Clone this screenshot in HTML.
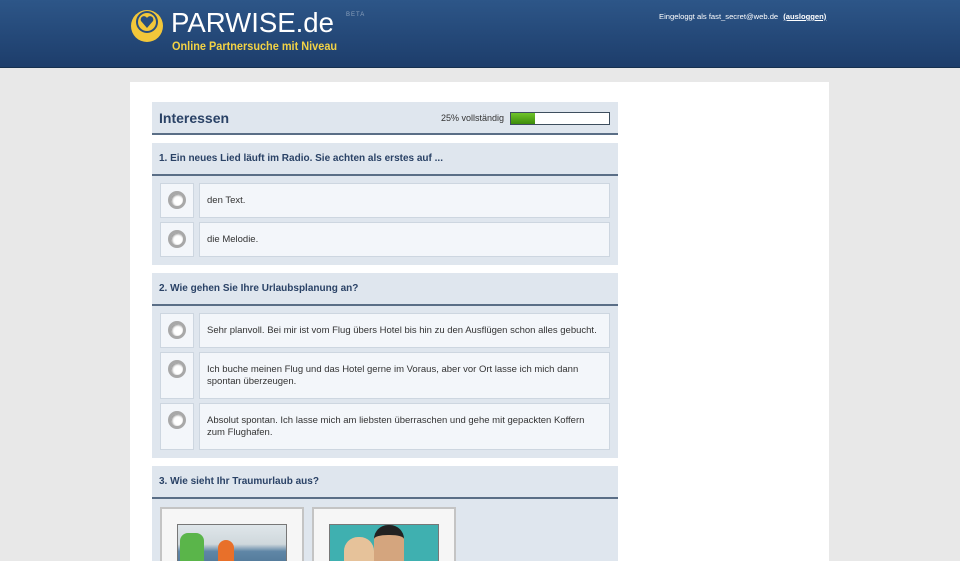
<!DOCTYPE html><html><head><meta charset="utf-8"><style>
*{margin:0;padding:0;box-sizing:border-box}
html,body{width:960px;height:561px;overflow:hidden}
body{background:#e8e8e8;font-family:"Liberation Sans",Arial,sans-serif;position:relative}
.hdr{position:absolute;left:0;top:0;width:960px;height:68px;background:linear-gradient(#2d5688,#1d3d6b);border-bottom:1px solid #16304f}
.logo{position:absolute;left:171px;top:8px;color:#fff;font-size:28px;line-height:30px;transform:scaleX(.985);transform-origin:left}
.beta{position:absolute;left:346px;top:12px;color:#8aa0bb;font-size:6px;letter-spacing:1px}
.slog{position:absolute;left:172px;top:39px;color:#f2d245;font-size:12px;font-weight:bold;transform:scaleX(.91);transform-origin:left;white-space:nowrap}
.login{position:absolute;left:659px;top:12px;color:#fff;font-size:7.6px;white-space:nowrap}
.login u{font-weight:bold;margin-left:3px}
.wrap{position:absolute;left:130px;top:82px;width:699px;height:479px;background:#fff}
.p{position:absolute;left:152px;width:466px;background:#dfe6ee;overflow:hidden}
.h{height:33px;border-bottom:2px solid #5a6e86;color:#2a4266;font-weight:bold;font-size:10px;line-height:12px;padding:10px 7px}
.rb{position:absolute;left:8px;width:34px;background:#f3f6fa;border:1px solid #cdd6e0}
.rb i{position:absolute;left:7px;width:18px;height:18px;border-radius:50%;border:3px solid #a8a8a8;background:#fff;box-shadow:inset 1px 1px 2px #888}
.tb{position:absolute;left:47px;width:411px;background:#f3f6fa;border:1px solid #cdd6e0;font-size:9.5px;color:#333;padding:0 7px;display:flex;align-items:center;line-height:12px}
</style></head><body>
<div class="hdr">
<svg style="position:absolute;left:130px;top:9px" width="36" height="34" viewBox="0 0 36 34"><circle cx="17" cy="17" r="16" fill="#f2c73a"/><circle cx="17" cy="13" r="11" fill="#284d7e"/><circle cx="17" cy="13" r="9" fill="#f2c73a"/><path d="M17 19 L11 12 A3 3 0 0 1 17 9 A3 3 0 0 1 23 12 Z" fill="#284d7e"/></svg>
<div class="logo">PARWISE.de</div><div class="beta">BETA</div>
<div class="slog">Online Partnersuche mit Niveau</div>
<div class="login">Eingeloggt als fast_secret@web.de <u>(ausloggen)</u></div>
</div>
<div class="wrap"></div>
<div class="p" style="top:102px;height:33px"><div class="h" style="font-size:14px;padding:8px 7px;line-height:16px">Interessen</div>
<div style="position:absolute;left:289px;top:11px;font-size:9px;color:#333">25% vollständig</div>
<div style="position:absolute;left:358px;top:10px;width:100px;height:13px;border:1px solid #3e4e5e;background:#fff"><div style="width:24px;height:11px;background:linear-gradient(#6fc42a,#3d8c0a)"></div></div></div>
<div class="p" style="top:143px;height:122px"><div class="h">1. Ein neues Lied läuft im Radio. Sie achten als erstes auf ...</div>
<div class="rb" style="top:40px;height:35px"><i style="top:7px"></i></div><div class="tb" style="top:40px;height:35px">den Text.</div>
<div class="rb" style="top:79px;height:35px"><i style="top:7px"></i></div><div class="tb" style="top:79px;height:35px">die Melodie.</div></div>
<div class="p" style="top:273px;height:185px"><div class="h">2. Wie gehen Sie Ihre Urlaubsplanung an?</div>
<div class="rb" style="top:40px;height:35px"><i style="top:7px"></i></div><div class="tb" style="top:40px;height:35px">Sehr planvoll. Bei mir ist vom Flug übers Hotel bis hin zu den Ausflügen schon alles gebucht.</div>
<div class="rb" style="top:79px;height:47px"><i style="top:7px"></i></div><div class="tb" style="top:79px;height:47px">Ich buche meinen Flug und das Hotel gerne im Voraus, aber vor Ort lasse ich mich dann spontan überzeugen.</div>
<div class="rb" style="top:130px;height:47px"><i style="top:7px"></i></div><div class="tb" style="top:130px;height:47px">Absolut spontan. Ich lasse mich am liebsten überraschen und gehe mit gepackten Koffern zum Flughafen.</div></div>
<div class="p" style="top:466px;height:95px"><div class="h">3. Wie sieht Ihr Traumurlaub aus?</div>
<div style="position:absolute;left:8px;top:41px;width:144px;height:60px;background:#f6f6f6;border:2px solid #c4c4c4"><div style="position:absolute;left:15px;top:15px;width:110px;height:50px;border:1px solid #777;background:linear-gradient(#dfe6ea 0,#cfd8dc 40%,#5f86a6 55%,#4a7090);overflow:hidden"><div style="position:absolute;left:2px;top:8px;width:24px;height:40px;background:#5ab54a;border-radius:8px 8px 0 0"></div><div style="position:absolute;left:40px;top:15px;width:16px;height:30px;background:#e8702a;border-radius:8px 8px 0 0"></div></div></div>
<div style="position:absolute;left:160px;top:41px;width:144px;height:60px;background:#f6f6f6;border:2px solid #c4c4c4"><div style="position:absolute;left:15px;top:15px;width:110px;height:50px;border:1px solid #777;background:#3fb0b0;overflow:hidden"><div style="position:absolute;left:14px;top:12px;width:30px;height:40px;background:#e6c29a;border-radius:14px 14px 0 0"></div><div style="position:absolute;left:44px;top:0;width:30px;height:45px;background:#d4a57e;border-radius:14px 14px 0 0;border-top:10px solid #222"></div></div></div></div>
</body></html>
